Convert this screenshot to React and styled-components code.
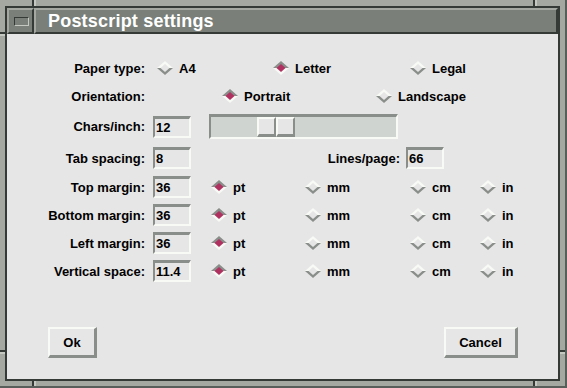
import React from 'react';
import styled, { createGlobalStyle } from 'styled-components';

const FACE = '#a4a8a0';
const DARK = '#363a36';
const TITLE = '#7a7f7a';
const BODY = '#e6e6e6';
const SHADE = '#8a8e8a';
const LIGHT = '#f8faf6';
const TROUGH = '#d0d4d0';
const MARK = '#b03060';

const GlobalStyle = createGlobalStyle`
  html, body {
    margin: 0;
    padding: 0;
    background: ${FACE};
  }
  body {
    font-family: "Liberation Sans", Arial, sans-serif;
    font-weight: bold;
    font-size: 13px;
    color: #000;
  }
`;

const Window = styled.div`
  position: relative;
  box-sizing: border-box;
  width: 567px;
  height: 388px;
  background: ${FACE};
  padding: 6px 5px 5px 5px;
  border-right: 2px solid #5a5e5a;
  border-bottom: 2px solid #5a5e5a;
  display: flex;
`;

const Notch = styled.span`
  position: absolute;
  left: ${({ $x }) => $x}px;
  top: ${({ $y }) => $y}px;
  width: ${({ $w }) => $w}px;
  height: ${({ $h }) => $h}px;
  background: ${DARK};
  box-shadow: ${({ $w }) => ($w < 4 ? `2px 0 0 ${'#c4c8c0'}` : `0 2px 0 ${'#c4c8c0'}`)};
`;

const Inner = styled.div`
  flex: 1;
  border: 2px solid ${DARK};
  display: flex;
  flex-direction: column;
`;

const TitleBar = styled.div`
  display: flex;
  height: 26px;
`;

const Bevel = styled.div`
  box-sizing: border-box;
  background: ${TITLE};
  border-top: 2px solid ${FACE};
  border-left: 2px solid ${FACE};
  border-right: 2px solid ${DARK};
  border-bottom: 2px solid ${DARK};
`;

const MenuButton = styled(Bevel)`
  width: 27px;
  display: flex;
  align-items: center;
  justify-content: center;
  padding: 1px 0 0 1px;
`;

const MenuGlyph = styled.span`
  box-sizing: border-box;
  width: 15px;
  height: 9px;
  border-top: 1px solid ${DARK};
  border-left: 1px solid ${DARK};
  border-bottom: 1px solid #c4c8c0;
  border-right: 1px solid #c4c8c0;
`;

const TitleText = styled(Bevel)`
  flex: 1;
  display: flex;
  align-items: center;
  padding-left: 12px;
  color: #fff;
  font-size: 18px;
  letter-spacing: 0.2px;
`;

const Body = styled.div`
  flex: 1;
  background: ${BODY};
  display: flex;
  flex-direction: column;
  padding-top: 20px;
`;

const Row = styled.div`
  display: flex;
  align-items: center;
  height: ${({ $h }) => $h}px;
  flex-shrink: 0;
`;

const Label = styled.span`
  flex-shrink: 0;
  width: ${({ $w }) => $w}px;
  text-align: right;
  white-space: nowrap;
`;

const Group = styled.div`
  display: flex;
  align-items: center;
  margin-left: ${({ $ml }) => $ml}px;
`;

const Option = styled.label`
  display: flex;
  align-items: center;
  gap: 6px;
  width: ${({ $w }) => ($w ? `${$w}px` : 'auto')};
  flex-shrink: 0;
  white-space: nowrap;
`;

const Field = styled.input`
  box-sizing: border-box;
  width: 38px;
  height: 22px;
  margin: 0 0 0 ${({ $ml }) => $ml}px;
  padding: 0 0 0 1px;
  background: ${BODY};
  border-top: 3px solid ${SHADE};
  border-left: 2px solid ${SHADE};
  border-bottom: 2px solid ${LIGHT};
  border-right: 2px solid ${LIGHT};
  border-radius: 0;
  outline: none;
  font: inherit;
  color: #000;
`;

const Trough = styled.div`
  box-sizing: border-box;
  width: 189px;
  height: 25px;
  margin-left: 18px;
  background: ${TROUGH};
  border-top: 3px solid ${SHADE};
  border-left: 2px solid ${SHADE};
  border-bottom: 2px solid ${LIGHT};
  border-right: 2px solid ${LIGHT};
  display: flex;
`;

const Thumb = styled.div`
  display: flex;
  height: 100%;
`;

const ThumbHalf = styled.div`
  box-sizing: border-box;
  width: 19px;
  height: 100%;
  background: ${BODY};
  border-top: 2px solid ${LIGHT};
  border-left: 2px solid ${LIGHT};
  border-bottom: 3px solid ${SHADE};
  border-right: 2px solid ${SHADE};
`;

const ButtonBar = styled.div`
  margin-top: auto;
  display: flex;
  justify-content: space-between;
  padding: 0 40px 21px 41px;
`;

const Button = styled.button`
  box-sizing: border-box;
  width: ${({ $w }) => $w}px;
  height: 31px;
  padding: 0;
  background: ${BODY};
  border-top: 2px solid ${LIGHT};
  border-left: 2px solid ${LIGHT};
  border-bottom: 3px solid ${SHADE};
  border-right: 3px solid ${SHADE};
  border-radius: 0;
  font: inherit;
  color: #000;
`;

function Radio({ on }) {
  const top = on ? SHADE : LIGHT;
  const bottom = on ? LIGHT : SHADE;
  return (
    <svg width="16" height="14" viewBox="0 0 16 14">
      <polygon points="0,7 8,0 16,7" fill={top} />
      <polygon points="0,7 8,14 16,7" fill={bottom} />
      <polygon points="8,3 12.5,7 8,11 3.5,7" fill={on ? MARK : BODY} />
    </svg>
  );
}

function Choice({ label, on, w }) {
  return (
    <Option $w={w}>
      <Radio on={on} />
      {label}
    </Option>
  );
}

const margins = [
  ['Top margin:', '36'],
  ['Bottom margin:', '36'],
  ['Left margin:', '36'],
  ['Vertical space:', '11.4'],
];

export default function App() {
  const chars = 12;
  const thumbOffset = Math.round((chars / 40) * 153);

  return (
    <>
      <GlobalStyle />
      <Window>
        <Notch $x={32} $y={0} $w={2} $h={6} />
        <Notch $x={533} $y={0} $w={2} $h={6} />
        <Notch $x={0} $y={32} $w={5} $h={2} />
        <Notch $x={0} $y={350} $w={5} $h={2} />
        <Notch $x={560} $y={350} $w={5} $h={2} />
        <Notch $x={32} $y={381} $w={2} $h={5} />
        <Notch $x={533} $y={381} $w={2} $h={5} />
        <Inner>
          <TitleBar>
            <MenuButton>
              <MenuGlyph />
            </MenuButton>
            <TitleText>Postscript settings</TitleText>
          </TitleBar>
          <Body>
            <Row $h={28}>
              <Label $w={138}>Paper type:</Label>
              <Group $ml={12}>
                <Choice label="A4" w={116} />
                <Choice label="Letter" on w={137} />
                <Choice label="Legal" />
              </Group>
            </Row>
            <Row $h={28}>
              <Label $w={138}>Orientation:</Label>
              <Group $ml={77}>
                <Choice label="Portrait" on w={154} />
                <Choice label="Landscape" />
              </Group>
            </Row>
            <Row $h={33}>
              <Label $w={138}>Chars/inch:</Label>
              <Field $ml={8} defaultValue="12" readOnly />
              <Trough>
                <Thumb style={{ marginLeft: thumbOffset }}>
                  <ThumbHalf />
                  <ThumbHalf />
                </Thumb>
              </Trough>
            </Row>
            <Row $h={30}>
              <Label $w={138}>Tab spacing:</Label>
              <Field $ml={8} defaultValue="8" readOnly />
              <Label $w={209}>Lines/page:</Label>
              <Field $ml={6} defaultValue="66" readOnly />
            </Row>
            {margins.map(([label, value]) => (
              <Row $h={28} key={label}>
                <Label $w={138}>{label}</Label>
                <Field $ml={8} defaultValue={value} readOnly />
                <Group $ml={20}>
                  <Choice label="pt" on w={94} />
                  <Choice label="mm" w={105} />
                  <Choice label="cm" w={70} />
                  <Choice label="in" />
                </Group>
              </Row>
            ))}
            <ButtonBar>
              <Button $w={49}>Ok</Button>
              <Button $w={74}>Cancel</Button>
            </ButtonBar>
          </Body>
        </Inner>
      </Window>
    </>
  );
}
